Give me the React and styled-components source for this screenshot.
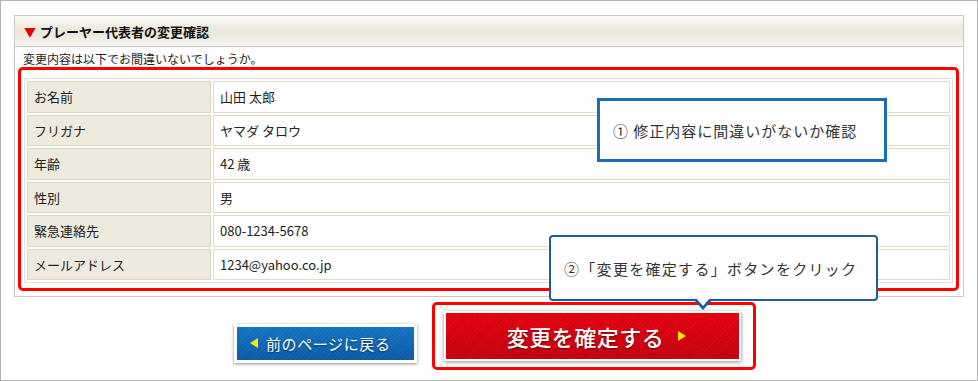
import React from 'react';
import styled, { createGlobalStyle } from 'styled-components';

const GlobalStyle = createGlobalStyle`
  body {
    margin: 0;
    background: #fff;
    font-family: 'Noto Sans CJK JP', 'Noto Sans', sans-serif;
    color: #222;
  }
`;

const Frame = styled.div`
  position: relative;
  box-sizing: border-box;
  width: 978px;
  height: 381px;
  border: 1px solid #b3b3b3;
  padding: 14px 0 0 13px;
  background: #fff;
`;

const Panel = styled.section`
  width: 950px;
  box-sizing: border-box;
  border: 1px solid #c8c8c8;
`;

const PanelHeader = styled.h2`
  display: flex;
  align-items: center;
  gap: 4px;
  margin: 0;
  height: 30px;
  padding-left: 9px;
  border-bottom: 1px solid #c8c8c8;
  background: linear-gradient(#fbfaf7 0%, #ece9dc 45%, #ece9dc 60%, #f7f6f1 100%);
  font-size: 13px;
  font-weight: bold;
  color: #111;
`;

const Arrow = styled.span`
  color: #e00000;
  font-size: 12px;
`;

const PanelBody = styled.div`
  padding: 3px 3px 5px 3px;
`;

const Lead = styled.p`
  margin: 0 0 0 5px;
  font-size: 12px;
  line-height: 18px;
  color: #222;
`;

const Highlight = styled.div`
  box-sizing: border-box;
  width: 941px;
  margin-top: -1px;
  border: 3px solid #ff0000;
  border-radius: 5px;
  padding: 8px 4px 5px 3px;
`;

const InfoTable = styled.table`
  width: 929px;
  border: 1px solid #e2e2e2;
  border-collapse: separate;
  border-spacing: 2px;
  font-size: 13px;
`;

const Label = styled.th`
  box-sizing: border-box;
  width: 184px;
  height: 31.5px;
  padding: 0 0 0 6px;
  text-align: left;
  font-weight: normal;
  background: #eeebde;
  border: 1px solid #dcd7bd;
  color: #222;
`;

const Value = styled.td`
  box-sizing: border-box;
  height: 31.5px;
  padding: 0 0 0 6px;
  background: #fff;
  border: 1px solid #e0dcc4;
  color: #222;
`;

const ButtonRow = styled.div`
  display: flex;
  align-items: center;
  justify-content: center;
  gap: 15px;
  margin-top: 5px;
  padding-right: 1px;
`;

const BackButton = styled.button`
  display: flex;
  align-items: center;
  gap: 8px;
  box-sizing: border-box;
  width: 183px;
  height: 39px;
  margin-top: 14px;
  padding: 0 0 0 13px;
  border: 3px solid #fff;
  background:
    repeating-linear-gradient(135deg, rgba(255, 255, 255, 0.04) 0 1px, transparent 1px 3px),
    linear-gradient(#1373c4, #0a5ba6);
  box-shadow: 0 1px 3px rgba(0, 0, 0, 0.45);
  color: #fff;
  font-family: inherit;
  font-size: 15px;
  letter-spacing: 0.6px;
  text-shadow: 0 1px 2px rgba(0, 0, 0, 0.5);
  cursor: pointer;
`;

const ConfirmFrame = styled.div`
  box-sizing: border-box;
  width: 324px;
  height: 68px;
  border: 3px solid #ff0000;
  border-radius: 5px;
  padding: 6px 12px 0 9px;
`;

const ConfirmButton = styled.button`
  display: flex;
  align-items: center;
  justify-content: center;
  gap: 14px;
  box-sizing: border-box;
  width: 297px;
  height: 50px;
  padding: 0 0 0 8px;
  border: 2px solid #fff;
  background:
    repeating-linear-gradient(135deg, rgba(255, 255, 255, 0.04) 0 1px, transparent 1px 3px),
    linear-gradient(#e4000e, #c3000f);
  box-shadow: 0 1px 4px rgba(0, 0, 0, 0.45);
  color: #fff;
  font-family: inherit;
  font-size: 22px;
  font-weight: 500;
  letter-spacing: 0.5px;
  text-shadow: 0 1px 2px rgba(0, 0, 0, 0.5);
  cursor: pointer;
`;

const Tri = styled.span`
  width: 0;
  height: 0;
  border-top: 5px solid transparent;
  border-bottom: 5px solid transparent;
  ${({ dir }) =>
    dir === 'left' ? 'border-right: 8px solid #ffe600;' : 'border-left: 8px solid #ffe600;'}
`;

const Callout = styled.div`
  position: absolute;
  box-sizing: border-box;
  display: flex;
  align-items: center;
  left: ${({ x }) => x}px;
  top: ${({ y }) => y}px;
  width: ${({ w }) => w}px;
  height: ${({ h }) => h}px;
  padding-left: 13px;
  background: #fff;
  border: ${({ round }) => (round ? '2px solid #1c5e9d' : '3px solid #1a6db6')};
  border-radius: ${({ round }) => (round ? '4px' : '0')};
  font-size: 15px;
  letter-spacing: ${({ round }) => (round ? '1.3px' : '1px')};
  color: #333;

  ${({ round }) =>
    round &&
    `
    &::before {
      content: '';
      position: absolute;
      left: 142px;
      bottom: -11px;
      border-left: 10px solid transparent;
      border-right: 10px solid transparent;
      border-top: 11px solid #1c5e9d;
    }
    &::after {
      content: '';
      position: absolute;
      left: 145px;
      bottom: -7px;
      border-left: 7px solid transparent;
      border-right: 7px solid transparent;
      border-top: 8px solid #fff;
    }
  `}
`;

const rows = [
  ['お名前', '山田 太郎'],
  ['フリガナ', 'ヤマダ タロウ'],
  ['年齢', '42 歳'],
  ['性別', '男'],
  ['緊急連絡先', '080-1234-5678'],
  ['メールアドレス', '1234@yahoo.co.jp'],
];

function App() {
  return (
    <>
      <GlobalStyle />
      <Frame>
        <Panel>
          <PanelHeader>
            <Arrow>▼</Arrow>
            プレーヤー代表者の変更確認
          </PanelHeader>
          <PanelBody>
            <Lead>変更内容は以下でお間違いないでしょうか。</Lead>
            <Highlight>
              <InfoTable>
                <tbody>
                  {rows.map(([label, value]) => (
                    <tr key={label}>
                      <Label>{label}</Label>
                      <Value>{value}</Value>
                    </tr>
                  ))}
                </tbody>
              </InfoTable>
            </Highlight>
          </PanelBody>
        </Panel>

        <ButtonRow>
          <BackButton>
            <Tri dir="left" />
            前のページに戻る
          </BackButton>
          <ConfirmFrame>
            <ConfirmButton>
              変更を確定する
              <Tri dir="right" />
            </ConfirmButton>
          </ConfirmFrame>
        </ButtonRow>

        <Callout x={596} y={97} w={290} h={64}>
          ① 修正内容に間違いがないか確認
        </Callout>
        <Callout x={548} y={234} w={329} h={66} round>
          ②「変更を確定する」ボタンをクリック
        </Callout>
      </Frame>
    </>
  );
}

export default App;
